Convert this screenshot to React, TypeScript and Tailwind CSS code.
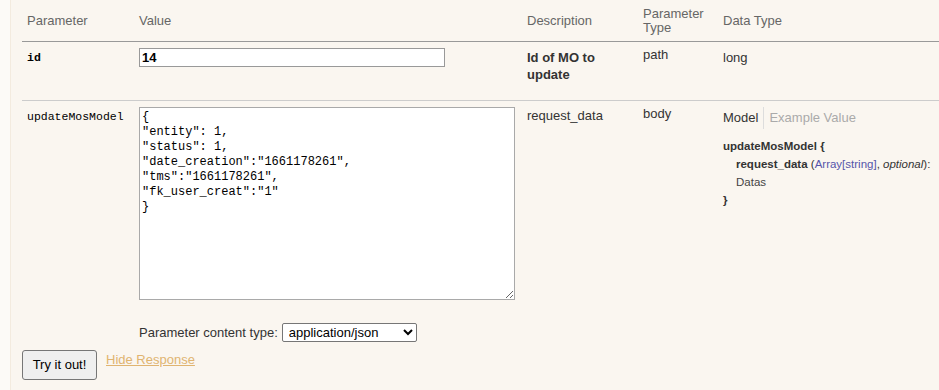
import React from 'react';

const cols = 'grid grid-cols-[112px_388px_116px_80px_1fr]';

export default function App() {
  const body = `{
"entity": 1,
"status": 1,
"date_creation":"1661178261",
"tms":"1661178261",
"fk_user_creat":"1"
}`;

  return (
    <div className="flex h-[390px] w-[939px] overflow-hidden bg-[#faf6f0] font-['Liberation_Sans',Arial,sans-serif] text-[13px] text-[#333]">
      <div className="w-[11px] shrink-0 border-r border-[#f3ebdf] bg-[#fcfaf7]" />
      <div className="flex-1 pl-[11px]">
        {/* header */}
        <div className={`${cols} h-[42px] items-center border-b border-[#999] pt-[1px] leading-[14px] text-[#666]`}>
          <div className="px-[5px]">Parameter</div>
          <div className="px-[5px]">Value</div>
          <div className="px-[5px]">Description</div>
          <div className="px-[5px]">Parameter<br />Type</div>
          <div className="px-[5px]">Data Type</div>
        </div>

        {/* id row */}
        <div className={`${cols} h-[59px] items-start border-b border-[#ccc]`}>
          <div className="px-[5px] pt-[8px] font-['Liberation_Mono',monospace] text-[11.5px] font-bold leading-[15px] text-black">id</div>
          <div className="px-[5px] pt-[6px]">
            <input
              readOnly
              value="14"
              className="h-[19px] w-[306px] border border-[#999] bg-white px-[2px] text-[13px] font-bold text-black outline-none"
            />
          </div>
          <div className="px-[5px] pt-[7px] font-bold leading-[17px]">Id of MO to update</div>
          <div className="px-[5px] pt-[4px] leading-[17px]">path</div>
          <div className="px-[5px] pt-[7px] leading-[17px]">long</div>
        </div>

        {/* body row */}
        <div className={`${cols} items-start`}>
          <div className="px-[5px] pt-[8px] font-['Liberation_Mono',monospace] text-[11.5px] leading-[15px] text-black">updateMosModel</div>
          <div className="px-[5px] pt-[6px]">
            <textarea
              readOnly
              value={body}
              className="block h-[193px] w-[376px] border border-[#a9a9a9] bg-white p-[2px] font-['Liberation_Mono',monospace] text-[12px] leading-[15px] text-black outline-none"
            />
            <div className="mt-[23px] flex items-center gap-[4px]">
              <span>Parameter content type:</span>
              <select className="h-[19px] w-[135px] rounded-[2px] border border-[#767676] bg-white px-[2px] text-[13px] text-black">
                <option>application/json</option>
              </select>
            </div>
          </div>
          <div className="px-[5px] pt-[7px] leading-[15px]">request_data</div>
          <div className="px-[5px] pt-[5px] leading-[15px]">body</div>
          <div className="px-[5px] pt-[6px]">
            <div className="flex items-center leading-[22px]">
              <span className="border-r border-[#ddd] pr-[5px] text-[#333]">Model</span>
              <span className="pl-[5px] text-[#aaa]">Example Value</span>
            </div>
            <div className="mt-[8px] text-[11.5px] leading-[18px] text-[#333]">
              <div className="font-bold">updateMosModel {'{'}</div>
              <div className="pl-[13px]">
                <span className="font-bold">request_data</span>{' '}
                (<span className="text-[#55a]">Array[string]</span>, <span className="italic">optional</span>):
              </div>
              <div className="pl-[13px] text-[#444]">Datas</div>
              <div className="font-bold">{'}'}</div>
            </div>
          </div>
        </div>

        {/* actions */}
        <div className="mt-[7px] flex items-start">
          <button className="h-[30px] w-[75px] rounded-[3px] border border-[#767676] bg-[#efefef] text-[13px] text-black">
            Try it out!
          </button>
          <a href="#" className="ml-[9px] mt-[2px] leading-[15px] text-[#e0b470] underline">Hide Response</a>
        </div>
      </div>
    </div>
  );
}
